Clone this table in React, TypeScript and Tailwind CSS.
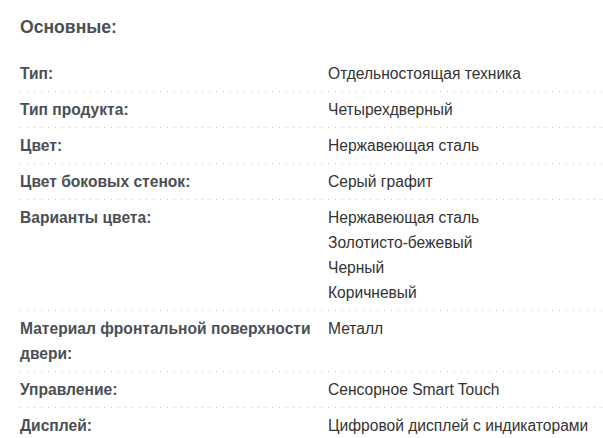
const rows: { label: string; values: string[] }[] = [
  { label: "Тип:", values: ["Отдельностоящая техника"] },
  { label: "Тип продукта:", values: ["Четырехдверный"] },
  { label: "Цвет:", values: ["Нержавеющая сталь"] },
  { label: "Цвет боковых стенок:", values: ["Серый графит"] },
  {
    label: "Варианты цвета:",
    values: ["Нержавеющая сталь", "Золотисто-бежевый", "Черный", "Коричневый"],
  },
  { label: "Материал фронтальной поверхности двери:", values: ["Металл"] },
  { label: "Управление:", values: ["Сенсорное Smart Touch"] },
  { label: "Дисплей:", values: ["Цифровой дисплей с индикаторами"] },
];

export default function App() {
  return (
    <div className="w-[603px] h-[438px] overflow-hidden bg-white pl-5 font-['Liberation_Sans',Arial,sans-serif]">
      <h2 className="pt-[16px] text-[17.6px] leading-[22px] font-bold text-[#4a4f55]">Основные:</h2>

      <div className="mt-[18px]">
        {rows.map((row, i) => (
          <div key={row.label}>
            {i > 0 && (
              <div className="h-px bg-[repeating-linear-gradient(to_right,#c4c4c4_0_1px,transparent_1px_7px)]" />
            )}
            <div className="flex py-[5px] text-[15.6px] leading-[25px]">
              <div className="w-[308px] pr-2 font-bold text-[#4a4f55]">{row.label}</div>
              <div className="flex-1 text-[#333]">
                {row.values.map((v) => (
                  <div key={v}>{v}</div>
                ))}
              </div>
            </div>
          </div>
        ))}
      </div>
    </div>
  );
}
